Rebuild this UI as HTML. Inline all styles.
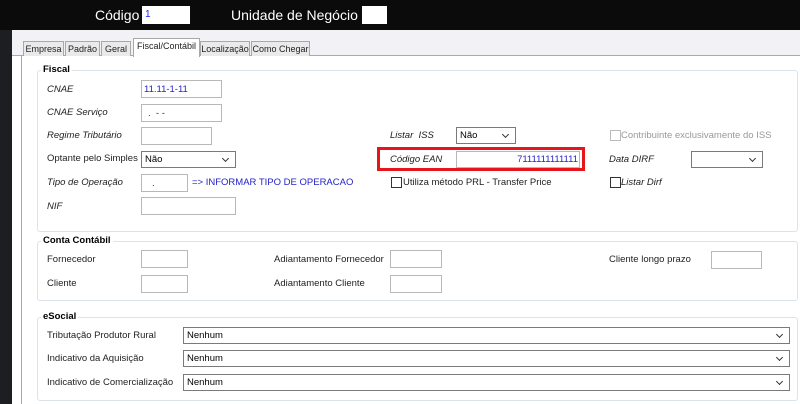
<!DOCTYPE html>
<html><head><meta charset="utf-8"><style>
*{box-sizing:border-box;margin:0;padding:0}
body{width:800px;height:404px;overflow:hidden;background:#fff;font-family:"Liberation Sans",sans-serif;font-size:9.5px;color:#000;position:relative}
.a{position:absolute;white-space:nowrap;line-height:12px}
.top{left:0;top:0;width:800px;height:30px;background:#0b0b0b}
.strip{left:0;top:30px;width:12px;height:374px;background:#1c1e22}
.tabbg{left:12px;top:30px;width:788px;height:26px;background:#f2f2f6;border-bottom:1px solid #a8a8b0}
.panel{left:21px;top:56px;width:779px;height:348px;background:#fff;border-left:1px solid #a8a8b0}
.hl{color:#fff;font-size:14px;line-height:18px}
.hin{background:#fff;height:18px}
.tab{top:41px;height:15px;background:#eaeaea;border:1px solid #a8a8a8;border-bottom:none;font-size:9px;padding:1px 0 0;text-align:center;color:#222}
.tab.on{top:38px;height:19px;background:#fff;padding-top:1px}
.fs{border:1px solid #dde3ea;border-radius:3px}
.lg{font-weight:bold;background:#fff;padding:0 2px;font-size:9.5px}
.i{font-style:italic;color:#222}
.lb{color:#222}
.in{border:1px solid #b8b8b8;background:#fff;height:18px}
.sel{border:1px solid #7a7a7a;background:#fff;height:17px;padding:2px 3px;font-size:9.5px}
.sel::after{content:"";position:absolute;right:7px;top:4px;width:4px;height:4px;border-right:1.2px solid #333;border-bottom:1.2px solid #333;transform:rotate(45deg)}
.cb{width:11px;height:11px;border:1px solid #333;background:#fff}
.blue{color:#2323c8}
</style></head><body>
<div class="a top"></div>
<div class="a hl" style="left:95px;top:6px">Código</div>
<div class="a hin" style="left:142px;top:6px;width:48px;font-size:10px;color:#22f;padding:3px 3px">1</div>
<div class="a hl" style="left:231px;top:6px">Unidade de Negócio</div>
<div class="a hin" style="left:362px;top:6px;width:25px"></div>
<div class="a strip"></div>
<div class="a tabbg"></div>
<div class="a panel"></div>
<div class="a tab" style="left:23px;width:41px">Empresa</div>
<div class="a tab" style="left:65px;width:35px">Padrão</div>
<div class="a tab" style="left:101px;width:30px">Geral</div>
<div class="a tab on" style="left:133px;width:67px">Fiscal/Contábil</div>
<div class="a tab" style="left:200px;width:50px">Localização</div>
<div class="a tab" style="left:251px;width:59px">Como Chegar</div>

<div class="a fs" style="left:37px;top:70px;width:761px;height:162px"></div>
<div class="a lg" style="left:41px;top:64px">Fiscal</div>
<div class="a i" style="left:47px;top:84px">CNAE</div>
<div class="a in blue" style="left:141px;top:80px;width:81px;padding:3px 2px">11.11-1-11</div>
<div class="a i" style="left:47px;top:107px">CNAE Serviço</div>
<div class="a in blue" style="left:141px;top:104px;width:81px;padding:3px 6px">.&nbsp; - -</div>
<div class="a i" style="left:47px;top:130px">Regime Tributário</div>
<div class="a in" style="left:141px;top:127px;width:71px"></div>
<div class="a lb" style="left:47px;top:153px">Optante pelo Simples</div>
<div class="a sel" style="left:141px;top:151px;width:95px">Não</div>
<div class="a i" style="left:47px;top:177px">Tipo de Operação</div>
<div class="a in blue" style="left:141px;top:174px;width:47px;padding:3px 10px">.</div>
<div class="a blue" style="left:192px;top:177px">=&gt; INFORMAR TIPO DE OPERACAO</div>
<div class="a i" style="left:47px;top:201px">NIF</div>
<div class="a in" style="left:141px;top:197px;width:95px"></div>

<div class="a i" style="left:390px;top:130px">Listar&nbsp; ISS</div>
<div class="a sel" style="left:456px;top:127px;width:60px">Não</div>
<div class="a cb" style="left:610px;top:130px;border-color:#bbb"></div>
<div class="a" style="left:621px;top:130px;color:#999">Contribuinte exclusivamente do ISS</div>
<div class="a" style="left:377px;top:147px;width:208px;height:24px;border:3px solid #e8141c"></div>
<div class="a i" style="left:390px;top:154px">Código EAN</div>
<div class="a in blue" style="left:456px;top:151px;width:124px;height:17px;text-align:right;padding:2px 1px">7111111111111</div>
<div class="a i" style="left:609px;top:154px">Data DIRF</div>
<div class="a sel" style="left:691px;top:151px;width:72px"></div>
<div class="a cb" style="left:391px;top:177px"></div>
<div class="a lb" style="left:403px;top:177px">Utiliza método PRL - Transfer Price</div>
<div class="a cb" style="left:610px;top:177px"></div>
<div class="a i" style="left:621px;top:177px">Listar Dirf</div>

<div class="a fs" style="left:37px;top:241px;width:761px;height:60px"></div>
<div class="a lg" style="left:41px;top:235px">Conta Contábil</div>
<div class="a lb" style="left:47px;top:254px">Fornecedor</div>
<div class="a in" style="left:141px;top:250px;width:47px"></div>
<div class="a lb" style="left:47px;top:278px">Cliente</div>
<div class="a in" style="left:141px;top:275px;width:47px"></div>
<div class="a lb" style="left:274px;top:254px">Adiantamento Fornecedor</div>
<div class="a in" style="left:390px;top:250px;width:52px"></div>
<div class="a lb" style="left:274px;top:278px">Adiantamento Cliente</div>
<div class="a in" style="left:390px;top:275px;width:52px"></div>
<div class="a lb" style="left:609px;top:254px">Cliente longo prazo</div>
<div class="a in" style="left:711px;top:251px;width:51px"></div>

<div class="a fs" style="left:37px;top:317px;width:761px;height:84px"></div>
<div class="a lg" style="left:41px;top:311px">eSocial</div>
<div class="a lb" style="left:47px;top:330px">Tributação Produtor Rural</div>
<div class="a sel" style="left:183px;top:327px;width:607px">Nenhum</div>
<div class="a lb" style="left:47px;top:353px">Indicativo da Aquisição</div>
<div class="a sel" style="left:183px;top:350px;width:607px">Nenhum</div>
<div class="a lb" style="left:47px;top:377px">Indicativo de Comercialização</div>
<div class="a sel" style="left:183px;top:374px;width:607px">Nenhum</div>
</body></html>
